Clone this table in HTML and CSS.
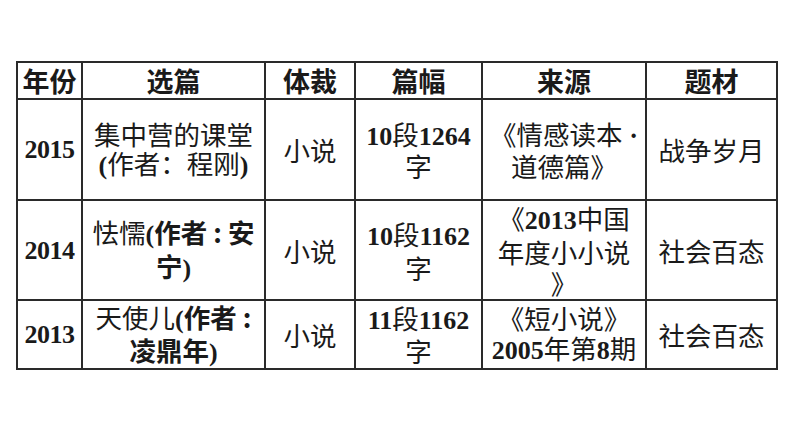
FILE: index.html
```html
<!DOCTYPE html>
<html lang="zh">
<head>
<meta charset="utf-8">
<link rel="stylesheet" href="styles.css">
</head>
<body>
<div class="page">
<table class="t">
<colgroup>
<col class="c1"><col class="c2"><col class="c3"><col class="c4"><col class="c5"><col class="c6">
</colgroup>
<tr class="head">
<th>年份</th><th>选篇</th><th>体裁</th><th>篇幅</th><th>来源</th><th>题材</th>
</tr>
<tr class="r1">
<td class="num">2015</td>
<td>集中营的课堂<br><b class="p">(</b>作者：程刚<b class="p">)</b></td>
<td>小说</td>
<td><b class="n">10</b>段<b class="n">1264</b><br>字</td>
<td>《情感读本<span class="dot"> ·</span><br>道德篇》</td>
<td>战争岁月</td>
</tr>
<tr class="r2">
<td class="num">2014</td>
<td>怯懦<b><span class="p">(</span>作者 : 安</b><br><b>宁<span class="p">)</span></b></td>
<td>小说</td>
<td><b class="n">10</b>段<b class="n">1162</b><br>字</td>
<td>《<b class="n">2013</b>中国<br>年度小小说<br>》</td>
<td>社会百态</td>
</tr>
<tr class="r3">
<td class="num">2013</td>
<td>天使儿<b><span class="p">(</span>作者 :</b><br><b>凌鼎年<span class="p">)</span></b></td>
<td>小说</td>
<td><b class="n">11</b>段<b class="n">1162</b><br>字</td>
<td>《短小说》<br><b class="n">2005</b>年第<b class="n">8</b>期</td>
<td>社会百态</td>
</tr>
</table>
</div>
</body>
</html>
```
FILE: styles.css
```css
html, body {
  margin: 0;
  padding: 0;
  background: #ffffff;
}
.page {
  padding: 61px 0 0 16px;
}
.t {
  border-collapse: collapse;
  table-layout: fixed;
  width: 762px;
  font-family: "Noto Sans CJK SC", "Noto Sans", sans-serif;
  font-size: 26.5px;
  line-height: 30px;
  color: #1a1a1a;
}
.c1 { width: 65px; }
.c2 { width: 183px; }
.c3 { width: 90px; }
.c4 { width: 127px; }
.c5 { width: 164px; }
.c6 { width: 131px; }
.t th, .t td {
  border: 2px solid #2a2a2a;
  text-align: center;
  vertical-align: middle;
  padding: 0 1px;
  white-space: nowrap;
}
.t th {
  font-weight: 700;
  height: 35px;
  line-height: 35px;
  font-size: 27px;
}
.r1 td { height: 99px; line-height: 29px; }
.r2 td { height: 98px; line-height: 31px; }
.r3 td { height: 67px; line-height: 30px; }
.num {
  font-family: "Liberation Serif", serif;
  font-weight: 700;
  font-size: 26px;
  letter-spacing: -0.5px;
}
.t b {
  font-weight: 700;
}
.t b.n {
  font-family: "Liberation Serif", serif;
  font-size: 26px;
}
.t .p {
  font-family: "Liberation Serif", serif;
  font-weight: 700;
  font-size: 26px;
}
.t .dot {
  font-family: "Liberation Serif", serif;
  font-weight: 700;
}
```
